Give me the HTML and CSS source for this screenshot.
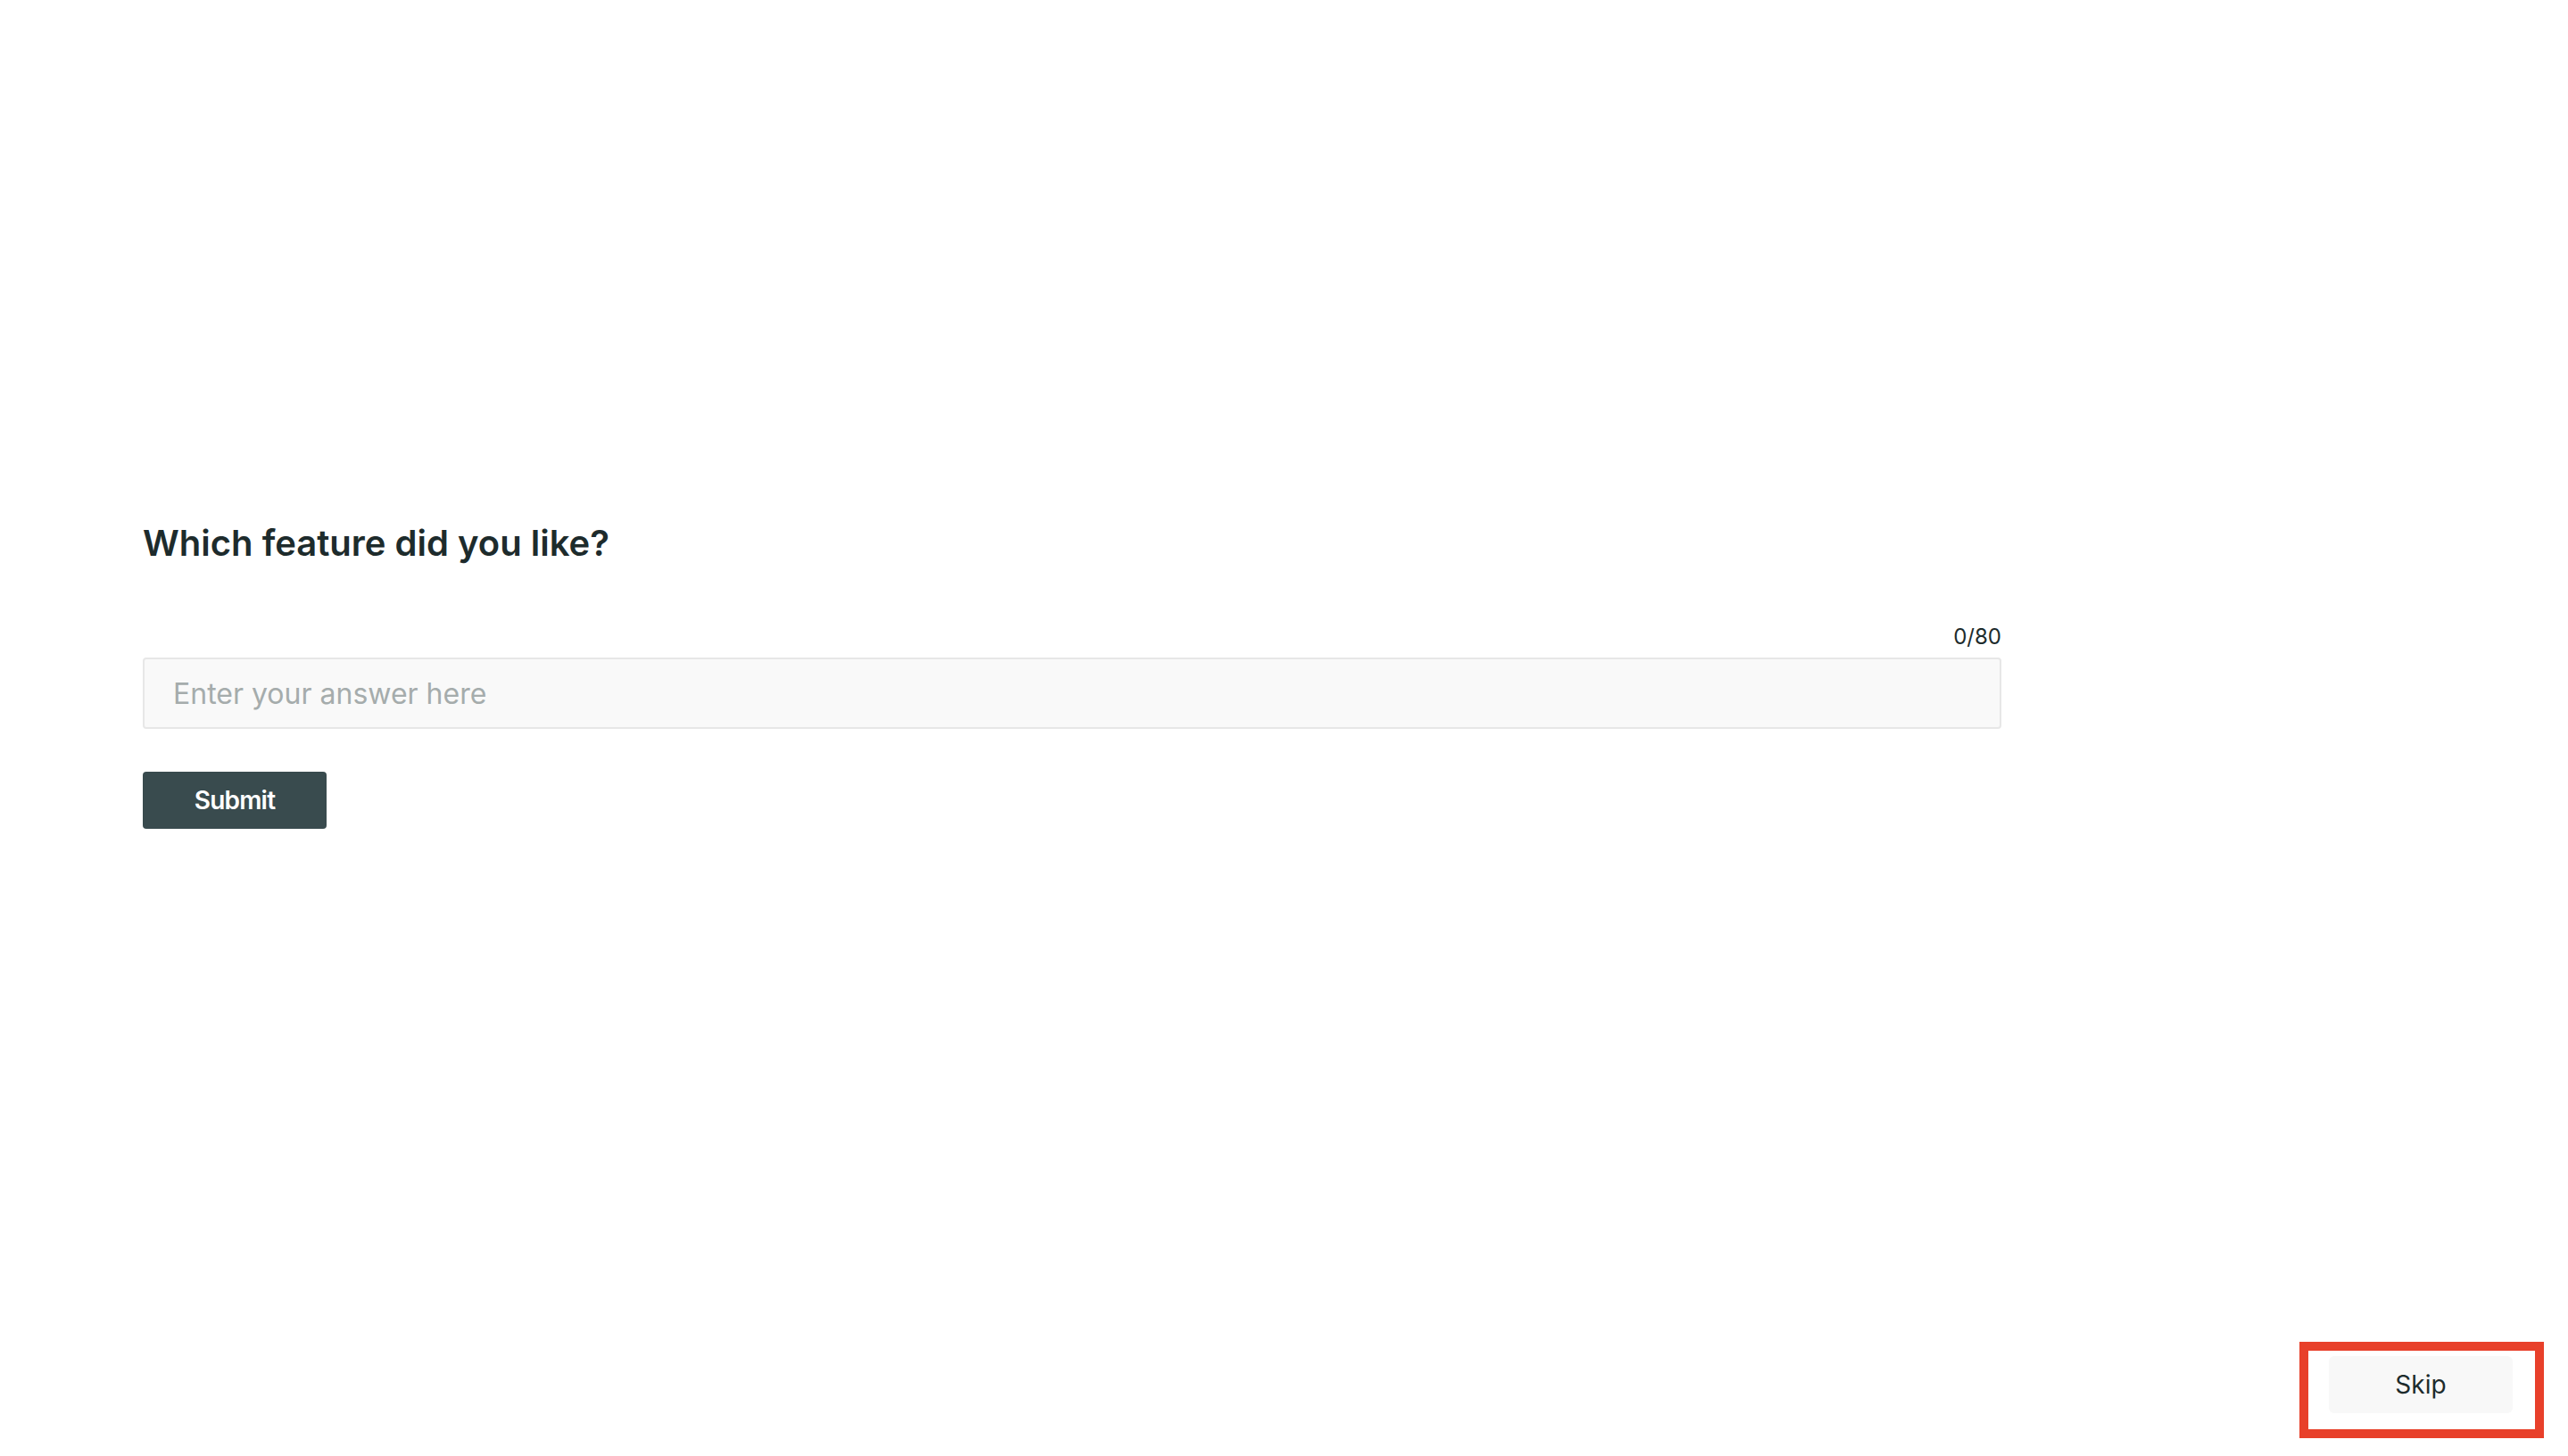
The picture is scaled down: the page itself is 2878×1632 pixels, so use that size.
FILE: index.html
```html
<!DOCTYPE html>
<html lang="en">
<head>
<meta charset="utf-8">
<title>Which feature did you like?</title>
<link rel="stylesheet" href="styles.css">
</head>
<body>
<main class="page">
  <section class="question">
    <h1 class="question-title">Which feature did you like?</h1>
    <div class="counter">0/80</div>
    <input class="answer" type="text" placeholder="Enter your answer here">
    <button class="submit" type="button">Submit</button>
  </section>
  <footer class="footer">
    <div class="skip-wrap">
      <button class="skip" type="button">Skip</button>
      <span class="highlight"></span>
    </div>
  </footer>
</main>
</body>
</html>
```

FILE: styles.css
```css
* { box-sizing: border-box; }
html, body {
  margin: 0;
  padding: 0;
  background: #ffffff;
}
body {
  font-family: Inter, "Noto Sans", "Liberation Sans", sans-serif;
  color: #1d2b2c;
}
.page {
  height: 1632px;
  display: flex;
  flex-direction: column;
  justify-content: space-between;
}
.question {
  padding: 585px 0 0 160px;
  width: 2243px;
  display: flex;
  flex-direction: column;
  align-items: flex-start;
}
.question-title {
  margin: 0;
  font-size: 40px;
  line-height: 48px;
  font-weight: 600;
  color: #1d2b2c;
}
.counter {
  align-self: flex-end;
  margin-top: 63px;
  font-size: 24px;
  line-height: 36px;
  color: #1d2b2c;
}
.answer {
  margin-top: 5px;
  width: 100%;
  height: 80px;
  border: 2px solid #e7e7e7;
  border-radius: 4px;
  background: #f9f9f9;
  padding: 0 32px;
  font-family: inherit;
  font-size: 32px;
  color: #1d2b2c;
  outline: none;
}
.answer::placeholder {
  color: #a5acac;
}
.submit {
  margin-top: 48px;
  width: 206px;
  height: 64px;
  padding: 0;
  border: none;
  border-radius: 4px;
  background: #394b4e;
  color: #ffffff;
  font-family: inherit;
  font-size: 28px;
  font-weight: 600;
  letter-spacing: -0.8px;
  cursor: pointer;
}
.footer {
  display: flex;
  justify-content: flex-end;
  padding: 0 62px 48px 0;
}
.skip-wrap {
  position: relative;
}
.skip {
  display: block;
  width: 206px;
  height: 64px;
  border: none;
  border-radius: 6px;
  background: #f8f8f8;
  color: #1d2b2c;
  font-family: inherit;
  font-size: 28px;
  font-weight: 400;
}
.highlight {
  position: absolute;
  left: -33px;
  top: -16px;
  right: -35px;
  bottom: -28px;
  border: 10px solid #e8402a;
  pointer-events: none;
}
```
